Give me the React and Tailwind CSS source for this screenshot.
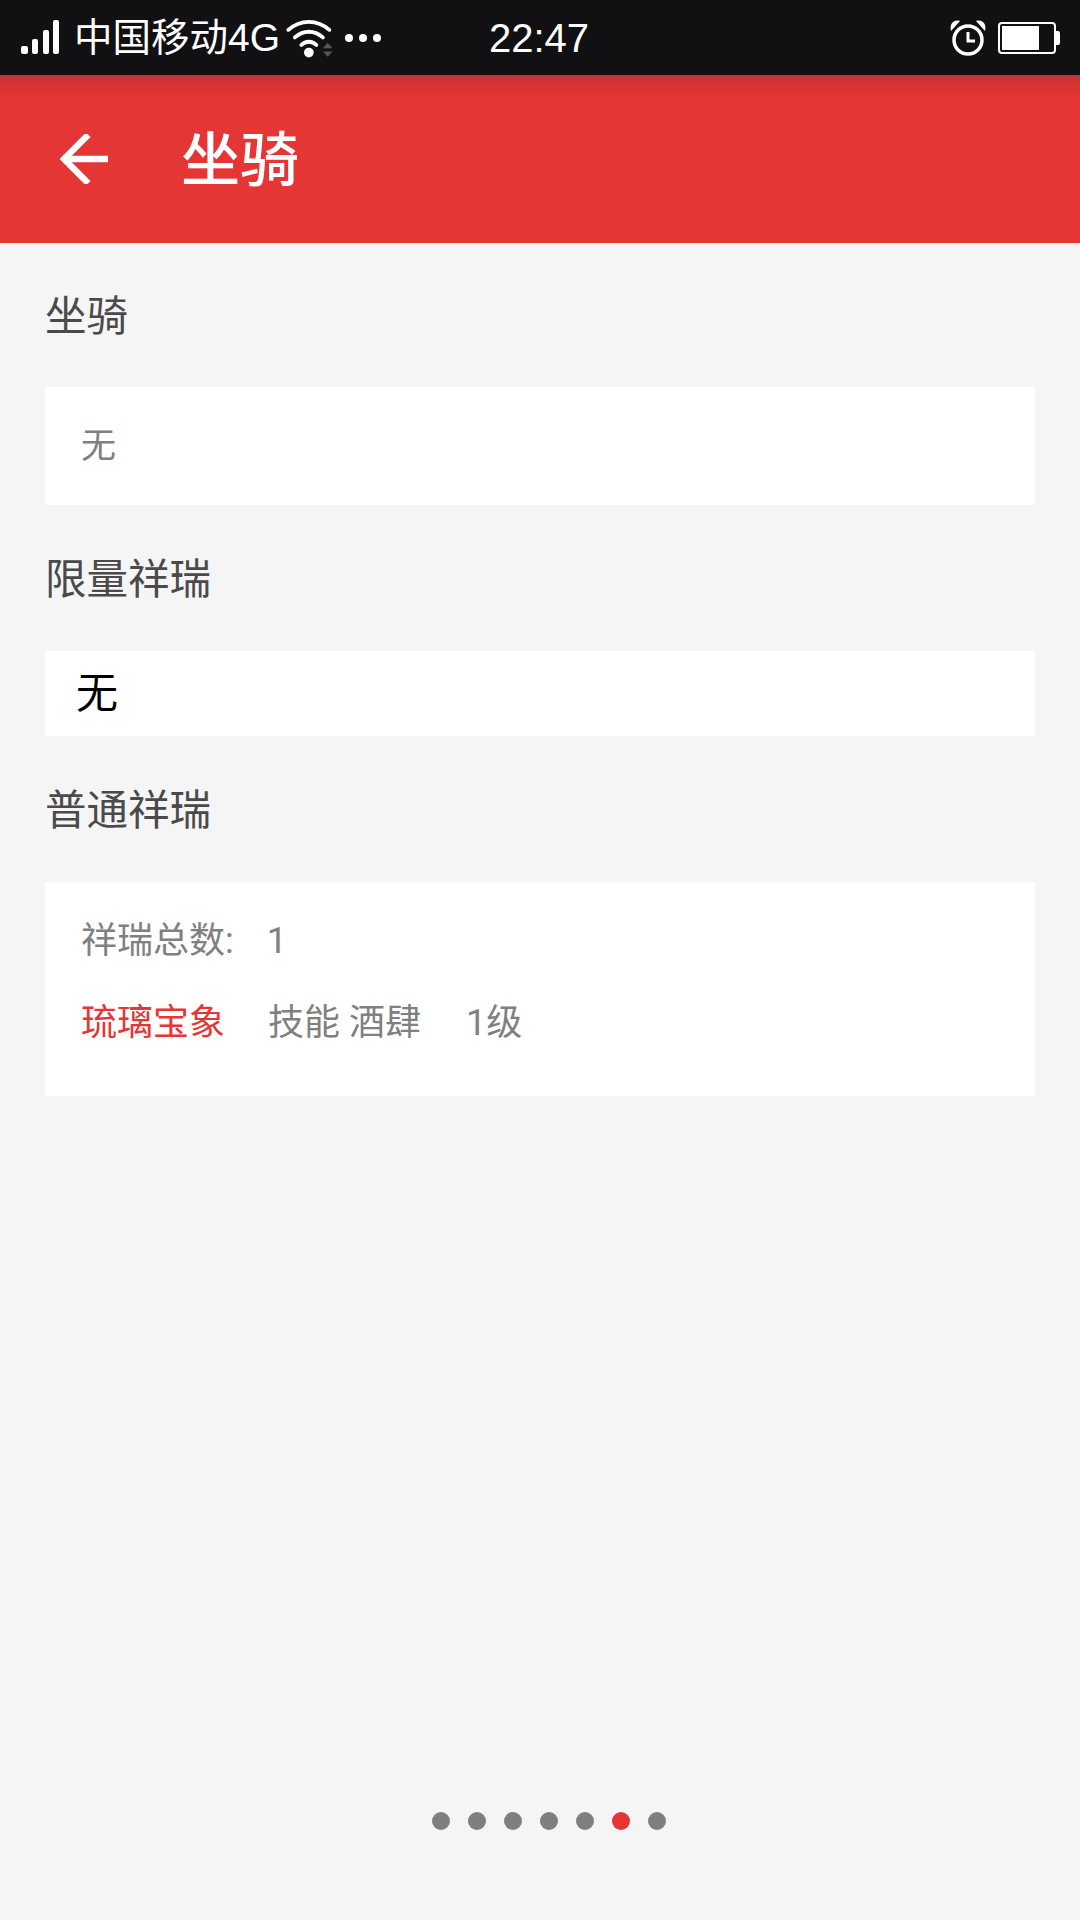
import React from 'react';

const CJK = "font-['Roboto','Noto_Sans_CJK_SC',sans-serif]";

// Status bar glyphs
const SignalIcon = () => (
  <svg width="40" height="36" viewBox="0 0 40 36" fill="white">
    <rect x="1" y="26" width="7" height="8" rx="2" />
    <rect x="12" y="19" width="6" height="15" rx="2" />
    <rect x="23" y="10" width="6" height="24" rx="2" />
    <rect x="33" y="0" width="6" height="34" rx="2" />
  </svg>
);

const WifiIcon = () => (
  <svg width="52" height="41" viewBox="0 0 48 38" fill="none">
    <path d="M3 11C14 1 30 1 41 11" stroke="white" strokeWidth="3.5" strokeLinecap="round" />
    <path d="M9 18C17 11 27 11 35 18" stroke="white" strokeWidth="3.5" strokeLinecap="round" />
    <path d="M15 25C19 21 25 21 29 25" stroke="white" strokeWidth="3.5" strokeLinecap="round" />
    <circle cx="22" cy="32" r="4.5" fill="white" />
    <path d="M35 28L39.5 23L44 28Z" fill="#55565a" />
    <path d="M35 31L44 31L39.5 36Z" fill="#55565a" />
  </svg>
);

const AlarmIcon = () => (
  <svg width="38" height="38" viewBox="0 0 38 38" fill="none">
    <ellipse cx="19" cy="21" rx="14" ry="14" stroke="white" strokeWidth="3.5" />
    <path d="M19 13V22H26" stroke="white" strokeWidth="3" />
    <path d="M2 12C0 5 5 0 11 2Z" fill="white" />
    <path d="M36 12C38 5 33 0 27 2Z" fill="white" />
  </svg>
);

const BatteryIcon = () => (
  <div className="flex items-center">
    <div className="w-[58px] h-[32px] border-2 border-white rounded-[4px] p-[2px] flex">
      <div className="w-[37px] bg-white" />
    </div>
    <div className="w-[4px] h-[14px] bg-white rounded-r-[2px]" />
  </div>
);

const StatusBar = () => (
  <div className="relative h-[75px] bg-[#111113] flex items-center pl-[20px] pr-[20px] text-white shrink-0">
    <SignalIcon />
    <span className="ml-[14px] text-[38.5px] leading-none">
      中国移动<span className="font-['Liberation_Sans',sans-serif] text-[39px]">4G</span>
    </span>
    <div className="ml-[5px] mt-[2px]"><WifiIcon /></div>
    <div className="ml-[8px] flex gap-[6px]">
      <span className="w-[8px] h-[8px] rounded-full bg-white" />
      <span className="w-[8px] h-[8px] rounded-full bg-white" />
      <span className="w-[8px] h-[8px] rounded-full bg-white" />
    </div>
    <span className="absolute left-[489px] top-[14px] text-[40px] leading-[48px] font-['Liberation_Sans',sans-serif]">22:47</span>
    <div className="ml-auto flex items-center gap-[11px]">
      <AlarmIcon />
      <BatteryIcon />
    </div>
  </div>
);

const Header = () => (
  <div className="h-[168px] shrink-0 bg-[linear-gradient(#c93232_0px,#e53535_22px)] flex items-center pl-[60px]">
    <svg width="50" height="50" viewBox="0 0 50 50" fill="none" stroke="white" strokeWidth="6.5" strokeLinecap="round">
      <path d="M48 25H4" strokeLinecap="butt" />
      <path d="M26 3L4 25L26 47" strokeLinecap="square" />
    </svg>
    <h1 className="ml-[71px] mt-[3px] text-[59px] leading-none font-medium text-white">坐骑</h1>
  </div>
);

const SectionTitle = ({ children, className }) => (
  <div className={`flex items-center pl-[45px] pt-[3px] text-[41.5px] leading-none text-[#4a4a4a] ${className}`}>{children}</div>
);

const Dots = () => (
  <div className="flex justify-center gap-[18px] pl-[18px]">
    {[0, 1, 2, 3, 4, 5, 6].map((i) => (
      <span key={i} className={`w-[18px] h-[18px] rounded-full ${i === 5 ? 'bg-[#e53535]' : 'bg-[#7f7f7f]'}`} />
    ))}
  </div>
);

export default function App() {
  return (
    <div className={`w-[1080px] h-[1920px] flex flex-col bg-[#f5f5f5] ${CJK}`}>
      <StatusBar />
      <Header />

      <div className="flex-1 flex flex-col">
        <SectionTitle className="h-[144px]">坐骑</SectionTitle>
        <div className="mx-[45px] h-[118px] bg-white flex items-center pl-[36px] pt-[2px] text-[35px] text-[#808080]">无</div>

        <SectionTitle className="h-[146px]">限量祥瑞</SectionTitle>
        <div className="mx-[45px] h-[85px] bg-white flex items-center pl-[31px] text-[42px] text-black">无</div>

        <SectionTitle className="h-[146px]">普通祥瑞</SectionTitle>
        <div className="mx-[45px] h-[214px] bg-white pl-[36px] pt-[37px] text-[36px] leading-[45px] text-[#808080]">
          <div className="flex">
            <span>祥瑞总数:</span>
            <span className="ml-[33px]">1</span>
          </div>
          <div className="flex mt-[37px]">
            <span className="text-[#e53535]">琉璃宝象</span>
            <span className="ml-[43px]">技能 酒肆</span>
            <span className="ml-[45px]">1级</span>
          </div>
        </div>

        <div className="mt-auto pb-[90px]">
          <Dots />
        </div>
      </div>
    </div>
  );
}
